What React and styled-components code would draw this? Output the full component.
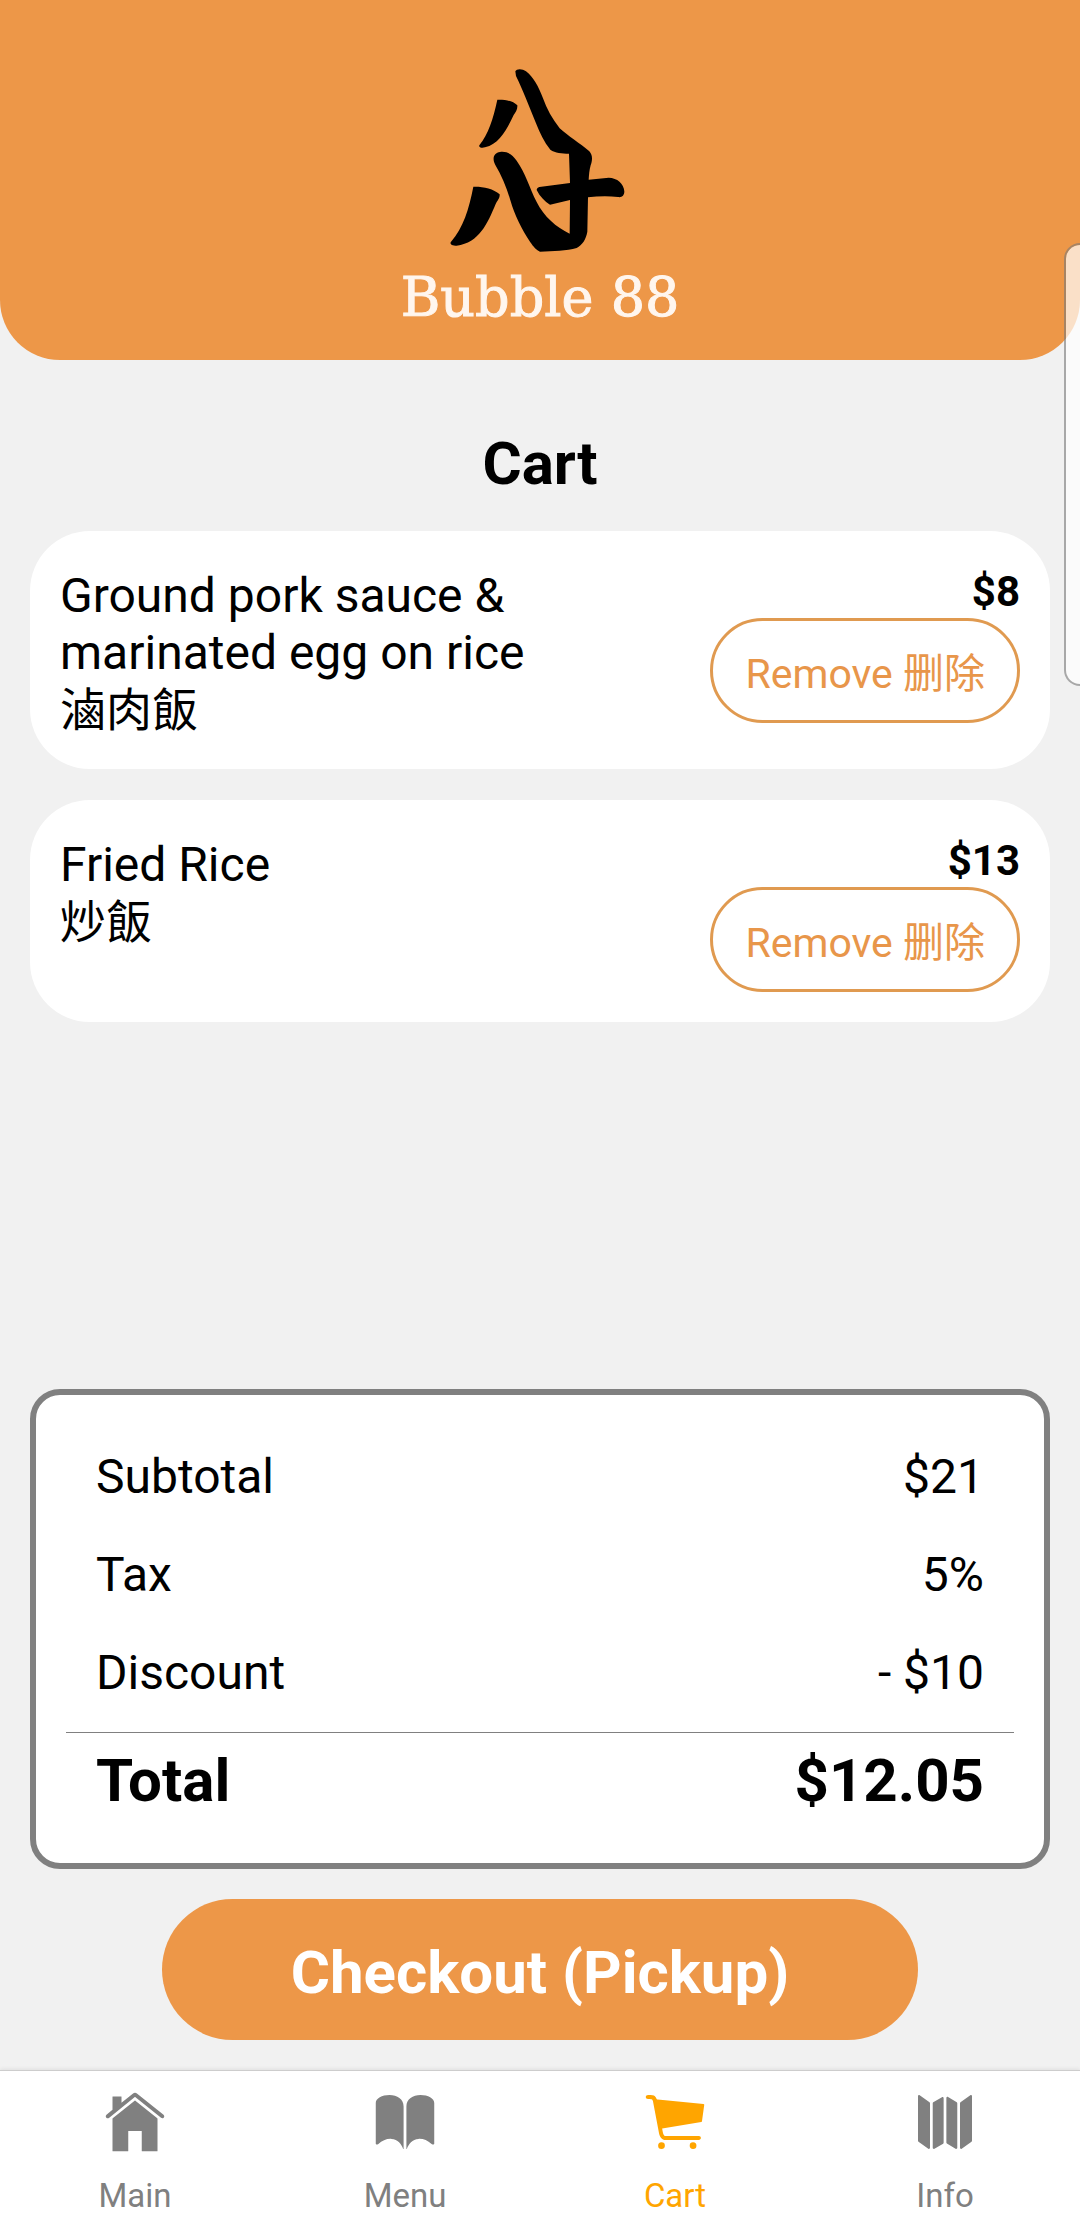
import React, { useState } from "react";
import styled, { createGlobalStyle } from "styled-components";
import { IoIosHome, IoIosBook, IoIosCart, IoIosMap } from "react-icons/io";

const GlobalStyle = createGlobalStyle`
  *, *::before, *::after { box-sizing: border-box; }
  body {
    margin: 0;
    background: #f1f1f1;
    color: #000;
    font-family: Roboto, "Noto Sans CJK SC", sans-serif;
  }
`;

const Screen = styled.div`
  display: flex;
  flex-direction: column;
  min-height: 100vh;
`;

const Header = styled.header`
  display: flex;
  flex-direction: column;
  align-items: center;
  padding: 60px 0 30px;
  border-radius: 0 0 60px 60px;
  background: #ed9748;
`;

const LogoMark = styled.svg`
  display: block;
  width: 192px;
  height: 200px;
`;

const LogoName = styled.div`
  margin-top: 6px;
  color: #fff6ee;
  font-family: "DejaVu Serif", serif;
  font-size: 54px;
  line-height: 64px;
  -webkit-text-stroke: 1px #fff6ee;
`;

const Content = styled.main`
  display: flex;
  flex: 1;
  flex-direction: column;
  padding: 68px 30px 30px;
`;

const Title = styled.h1`
  margin: 0 0 32px;
  font-size: 60px;
  line-height: 71px;
  font-weight: 700;
  text-align: center;
`;

const CartList = styled.ul`
  display: flex;
  flex: 1;
  flex-direction: column;
  gap: 31px;
  margin: 0;
  padding: 0 0 30px;
  list-style: none;
`;

const CartItem = styled.li`
  display: flex;
  justify-content: space-between;
  align-items: flex-start;
  padding: 36px 30px 30px;
  border-radius: 60px;
  background: #fff;
`;

const ItemName = styled.div`
  flex: 0 1 500px;
  font-size: 48px;
  line-height: 57px;
`;

const ItemNameLocal = styled.div`
  font-family: Roboto, "Noto Sans CJK TC", sans-serif;
  font-size: 46px;
  line-height: 58px;
`;

const ItemActions = styled.div`
  display: flex;
  flex-direction: column;
  align-items: flex-end;
  gap: 2px;
`;

const Price = styled.div`
  font-size: 42px;
  line-height: 49px;
  font-weight: 700;
`;

const RemoveButton = styled.button`
  height: 105px;
  padding: 0 32px 2px;
  border: 3px solid #e09a50;
  border-radius: 60px;
  background: #fff;
  color: #e8964a;
  font: inherit;
  font-size: 41px;
  white-space: nowrap;
  cursor: pointer;
`;

const Summary = styled.dl`
  margin: 0;
  padding: 32px 30px 36px;
  border: 6px solid #808080;
  border-radius: 30px;
  background: #fff;
`;

const SummaryRow = styled.div`
  display: flex;
  justify-content: space-between;
  align-items: center;
  height: 98px;
  padding: 0 30px;
  font-size: 48px;
`;

const TotalRow = styled(SummaryRow)`
  height: 95px;
  margin-top: 11px;
  border-top: 1px solid #808080;
  font-size: 60px;
  font-weight: 700;
`;

const Value = styled.dd`
  margin: 0;
`;

const CheckoutButton = styled.button`
  align-self: center;
  width: 70vw;
  height: 141px;
  margin-top: 30px;
  padding: 6px 0 0;
  border: 0;
  border-radius: 72px;
  background: #ed9748;
  color: #fff;
  font: inherit;
  font-size: 60px;
  font-weight: 700;
  cursor: pointer;
`;

const TabBar = styled.nav`
  display: grid;
  grid-template-columns: repeat(4, 1fr);
  height: 150px;
  border-top: 1px solid #cdcdcd;
  background: #fff;
  box-shadow: 0 -1px 4px rgba(0, 0, 0, 0.08);
`;

const Tab = styled.a`
  display: flex;
  flex-direction: column;
  align-items: center;
  gap: 18px;
  padding-top: 15px;
  color: ${(p) => (p.$active ? "#ffa500" : "#808080")};
  font-size: 33px;
  line-height: 40px;
  text-decoration: none;
`;

const EdgeHandle = styled.div`
  position: fixed;
  top: 243px;
  right: 0;
  width: 16px;
  height: 443px;
  border: 2px solid rgba(120, 120, 120, 0.6);
  border-right: 0;
  border-radius: 16px 0 0 16px;
  background: rgba(255, 255, 255, 0.7);
  background-clip: padding-box;
`;

const initialItems = [
  { id: 1, name: "Ground pork sauce & marinated egg on rice", local: "滷肉飯", price: 8 },
  { id: 2, name: "Fried Rice", local: "炒飯", price: 13 },
];

const tabs = [
  { label: "Main", Icon: IoIosHome },
  { label: "Menu", Icon: IoIosBook },
  { label: "Cart", Icon: IoIosCart, active: true },
  { label: "Info", Icon: IoIosMap },
];

const TAX = 0.05;
const DISCOUNT = 10;

function Logo() {
  return (
    <LogoMark viewBox="192 30 576 600" aria-hidden="true">
      <path d="M406 64C410 55 428 56 438 64C460 81 476 110 489 145C500 176 517 207 539 235C563 257 600 280 628 304C639 316 637 331 632 346C628 360 627 374 626 389L686 383C712 384 731 400 733 424C733 438 725 443 714 441C685 437 654 438 624 442L622 545C618 568 607 585 590 594C560 602 520 604 480 605C470 602 460 590 451 577C425 538 403 493 392 454C380 413 365 376 346 345C335 323 342 309 360 306C383 303 397 315 410 332C436 368 448 413 470 456C491 499 529 532 569 551L570 450L510 464C494 454 480 440 470 420C470 413 475 411 484 410L570 399L567 311C545 311 526 309 511 299C492 276 480 250 468 220C448 170 427 117 408 78Z" />
      <path d="M352 149C375 148 399 153 412 166C413 178 407 186 401 195C380 238 360 280 315 292C303 295 296 291 298 286C325 251 339 210 352 149Z" />
      <path d="M280 410C307 409 340 415 359 433C360 445 352 452 347 462C322 521 298 578 230 587C215 588 210 583 212 577C251 530 266 480 280 410Z" />
    </LogoMark>
  );
}

export default function App() {
  const [items, setItems] = useState(initialItems);
  const subtotal = items.reduce((sum, item) => sum + item.price, 0);
  const total = Math.max(0, subtotal * (1 + TAX) - DISCOUNT);

  return (
    <>
      <GlobalStyle />
      <Screen>
        <Header>
          <Logo />
          <LogoName>Bubble 88</LogoName>
        </Header>
        <Content>
          <Title>Cart</Title>
          <CartList>
            {items.map((item) => (
              <CartItem key={item.id}>
                <ItemName>
                  {item.name}
                  <ItemNameLocal lang="zh-Hant">{item.local}</ItemNameLocal>
                </ItemName>
                <ItemActions>
                  <Price>${item.price}</Price>
                  <RemoveButton
                    type="button"
                    onClick={() => setItems(items.filter((other) => other.id !== item.id))}
                  >
                    Remove 删除
                  </RemoveButton>
                </ItemActions>
              </CartItem>
            ))}
          </CartList>
          <Summary>
            <SummaryRow>
              <dt>Subtotal</dt>
              <Value>${subtotal}</Value>
            </SummaryRow>
            <SummaryRow>
              <dt>Tax</dt>
              <Value>{TAX * 100}%</Value>
            </SummaryRow>
            <SummaryRow>
              <dt>Discount</dt>
              <Value>- ${DISCOUNT}</Value>
            </SummaryRow>
            <TotalRow>
              <dt>Total</dt>
              <Value>${total.toFixed(2)}</Value>
            </TotalRow>
          </Summary>
          <CheckoutButton type="button">Checkout (Pickup)</CheckoutButton>
        </Content>
        <TabBar>
          {tabs.map(({ label, Icon, active }) => (
            <Tab key={label} href={`#${label.toLowerCase()}`} $active={active}>
              <Icon size={72} aria-hidden="true" />
              {label}
            </Tab>
          ))}
        </TabBar>
      </Screen>
      <EdgeHandle />
    </>
  );
}
